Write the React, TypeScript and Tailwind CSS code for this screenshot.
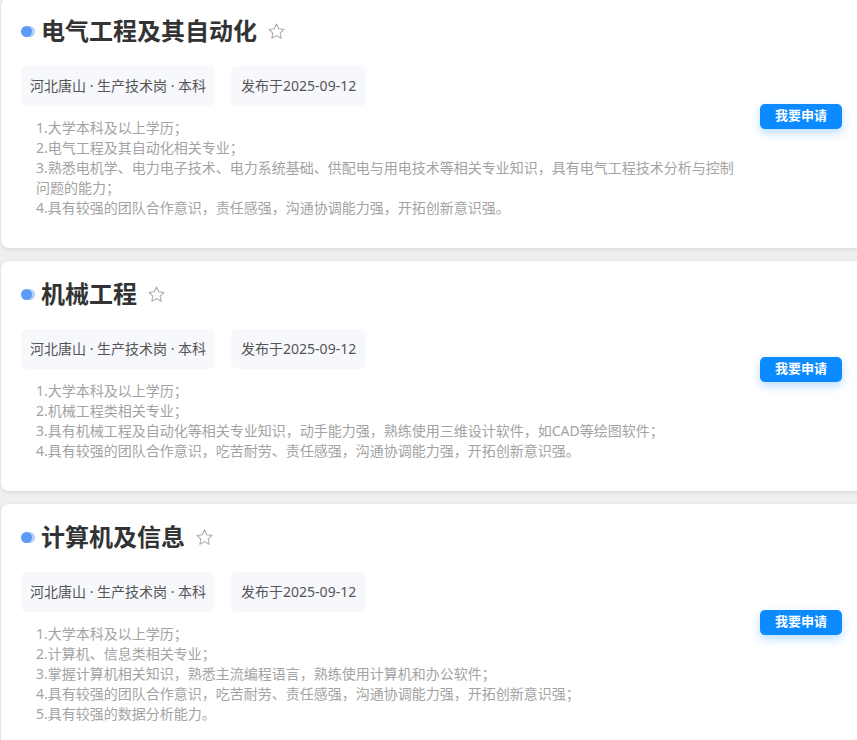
import React from 'react';

interface Job {
    title: string;
    location: string;
    date: string;
    requirements: string[];
}

const jobs: Job[] = [
    {
        title: '电气工程及其自动化',
        location: '河北唐山 · 生产技术岗 · 本科',
        date: '发布于2025-09-12',
        requirements: [
            '1.大学本科及以上学历；',
            '2.电气工程及其自动化相关专业；',
            '3.熟悉电机学、电力电子技术、电力系统基础、供配电与用电技术等相关专业知识，具有电气工程技术分析与控制问题的能力；',
            '4.具有较强的团队合作意识，责任感强，沟通协调能力强，开拓创新意识强。',
        ],
    },
    {
        title: '机械工程',
        location: '河北唐山 · 生产技术岗 · 本科',
        date: '发布于2025-09-12',
        requirements: [
            '1.大学本科及以上学历；',
            '2.机械工程类相关专业；',
            '3.具有机械工程及自动化等相关专业知识，动手能力强，熟练使用三维设计软件，如CAD等绘图软件；',
            '4.具有较强的团队合作意识，吃苦耐劳、责任感强，沟通协调能力强，开拓创新意识强。',
        ],
    },
    {
        title: '计算机及信息',
        location: '河北唐山 · 生产技术岗 · 本科',
        date: '发布于2025-09-12',
        requirements: [
            '1.大学本科及以上学历；',
            '2.计算机、信息类相关专业；',
            '3.掌握计算机相关知识，熟悉主流编程语言，熟练使用计算机和办公软件；',
            '4.具有较强的团队合作意识，吃苦耐劳、责任感强，沟通协调能力强，开拓创新意识强；',
            '5.具有较强的数据分析能力。',
        ],
    },
];

const StarIcon = () => (
    <svg width="19" height="19" viewBox="0 0 24 24" fill="none" stroke="#a8a8a8" strokeWidth={1.3} strokeLinejoin="round">
        <polygon points="12,2.5 14.9,8.6 21.5,9.4 16.6,13.9 17.9,20.5 12,17.2 6.1,20.5 7.4,13.9 2.5,9.4 9.1,8.6" />
    </svg>
);

const JobCard: React.FC<{ job: Job }> = ({ job }) => (
    <div className="w-[880px] bg-white rounded-lg shadow-[0_1px_4px_rgba(0,0,0,0.1)] flex items-center pl-5 pr-[39px] pt-[18px] pb-[30px]">
        <div className="w-[725px] shrink-0">
            {/* title */}
            <div className="flex items-center h-[30px]">
                <span className="w-[11px] h-[11px] rounded-full bg-[#5c9bf7] shadow-[3px_0_0_#b3cffb] mr-[9px]" />
                <h2 className="text-[24px] leading-[30px] font-bold text-[#333]">{job.title}</h2>
                <span className="ml-[10px] flex items-center"><StarIcon /></span>
            </div>
            {/* tags */}
            <div className="flex gap-4 mt-5">
                <span className="px-[9px] py-[10px] text-[14px] leading-[20px] text-[#555] bg-[#f6f8fc] rounded-md">{job.location}</span>
                <span className="px-[10px] py-[10px] text-[14px] leading-[20px] text-[#555] bg-[#f6f8fc] rounded-md">{job.date}</span>
            </div>
            {/* requirements */}
            <div className="mt-3 pl-[15px] text-[14px] leading-[20px] text-[#a3a3a3]">
                {job.requirements.map(r => (
                    <p key={r}>{r}</p>
                ))}
            </div>
        </div>
        <button className="ml-[14px] w-[82px] h-[25px] rounded-[5px] bg-[#0b8bff] text-white text-[13px] font-bold shadow-[0_4px_10px_rgba(24,144,255,0.3)] -mt-[2px]">
            我要申请
        </button>
    </div>
);

export default function App() {
    return (
        <div className="min-h-screen overflow-hidden bg-[#efefef]" style={{ fontFamily: '"Noto Sans", "Noto Sans CJK SC", sans-serif' }}>
            <div className="-mt-[2px] pl-px flex flex-col gap-[13px]">
                {jobs.map(job => (
                    <JobCard key={job.title} job={job} />
                ))}
            </div>
        </div>
    );
}
